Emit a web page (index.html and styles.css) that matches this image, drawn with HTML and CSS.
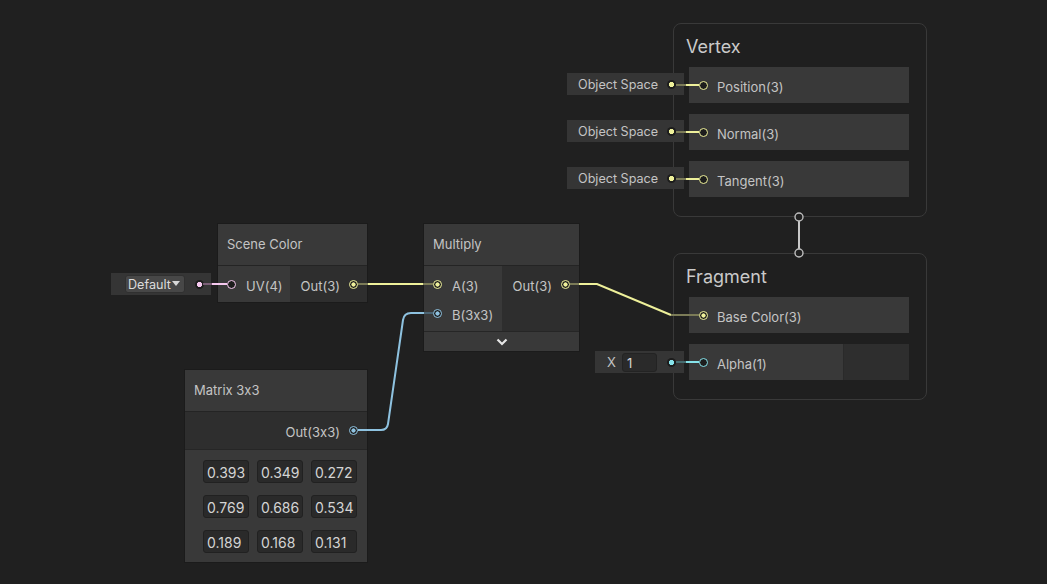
FILE: index.html
```html
<!DOCTYPE html>
<html>
<head>
<meta charset="utf-8">
<link rel="stylesheet" href="styles.css">
</head>
<body>
<div class="canvas">

  <!-- Vertex context -->
  <div class="context vertex">
    <div class="ctx-title">Vertex</div>
    <div class="block"><div class="block-main"><span class="port yellow"></span><span class="lbl">Position(3)</span></div></div>
    <div class="block"><div class="block-main"><span class="port yellow"></span><span class="lbl">Normal(3)</span></div></div>
    <div class="block"><div class="block-main"><span class="port yellow"></span><span class="lbl">Tangent(3)</span></div></div>
  </div>

  <!-- Fragment context -->
  <div class="context fragment">
    <div class="ctx-title">Fragment</div>
    <div class="block"><div class="block-main"><span class="port yellow filled"></span><span class="lbl">Base Color(3)</span></div></div>
    <div class="block split"><div class="block-main"><span class="port cyan"></span><span class="lbl">Alpha(1)</span></div><div class="block-side"></div></div>
  </div>

  <!-- inline inputs -->
  <div class="inline-input os1"><span class="inline-label">Object Space</span><span class="dot yellow"></span></div>
  <div class="inline-input os2"><span class="inline-label">Object Space</span><span class="dot yellow"></span></div>
  <div class="inline-input os3"><span class="inline-label">Object Space</span><span class="dot yellow"></span></div>
  <div class="inline-input xin"><span class="x-label">X</span><span class="x-field">1</span><span class="dot cyan"></span></div>
  <div class="inline-input defin"><span class="dropdown"><span class="dd-text">Default</span><span class="dd-arrow"></span></span><span class="dot pink"></span></div>

  <!-- Scene Color -->
  <div class="node scene">
    <div class="node-title">Scene Color</div>
    <div class="node-ports">
      <div class="inputs w72">
        <div class="port-row"><span class="port pink"></span><span class="lbl">UV(4)</span></div>
      </div>
      <div class="outputs">
        <div class="port-row"><span class="lbl">Out(3)</span><span class="port yellow filled"></span></div>
      </div>
    </div>
  </div>

  <!-- Multiply -->
  <div class="node multiply">
    <div class="node-title">Multiply</div>
    <div class="node-ports">
      <div class="inputs w78">
        <div class="port-row"><span class="port yellow filled"></span><span class="lbl">A(3)</span></div>
        <div class="port-row"><span class="port blue filled"></span><span class="lbl">B(3x3)</span></div>
      </div>
      <div class="outputs">
        <div class="port-row"><span class="lbl">Out(3)</span><span class="port yellow filled"></span></div>
      </div>
    </div>
    <div class="collapse">
      <svg width="12" height="8" viewBox="0 0 12 8"><path d="M1.5 1.5 L6 6 L10.5 1.5" fill="none" stroke="#e6e6e6" stroke-width="2.2"/></svg>
    </div>
  </div>

  <!-- Matrix 3x3 -->
  <div class="node matrix">
    <div class="node-title">Matrix 3x3</div>
    <div class="outputs single">
      <div class="port-row"><span class="lbl">Out(3x3)</span><span class="port blue filled"></span></div>
    </div>
    <div class="matrix-body">
      <span class="field">0.393</span><span class="field">0.349</span><span class="field">0.272</span>
      <span class="field">0.769</span><span class="field">0.686</span><span class="field">0.534</span>
      <span class="field">0.189</span><span class="field">0.168</span><span class="field">0.131</span>
    </div>
  </div>

  <!-- edges -->
  <svg class="edges" width="1047" height="584" viewBox="0 0 1047 584">
    <g fill="none" stroke-width="2">
      <!-- Scene Color -> Multiply A -->
      <path d="M358 284 H368" stroke="#7b7b57"/>
      <path d="M368 284 H423" stroke="#eef09a"/>
      <path d="M423 284 H433" stroke="#7b7b57"/>
      <!-- Multiply Out -> Base Color -->
      <path d="M570 284 H579" stroke="#7b7b57"/>
      <path d="M579 284 H597 L671 315" stroke="#eef09a"/>
      <path d="M671 315 H699" stroke="#7b7b57"/>
      <!-- Matrix -> B -->
      <path d="M358 430 H381 Q387 430 388 424 L403 320 Q404 313 411 313 H424" stroke="#8ec2e0"/>
      <path d="M424 313 H433" stroke="#4b6473"/>
      <!-- Default -> UV -->
      <path d="M203 284 H212" stroke="#7a5e76"/>
      <path d="M212 284 H227" stroke="#f6c9ef"/>
      <!-- Object space -> vertex ports -->
      <path d="M676 85 H686" stroke="#7b7b57"/>
      <path d="M686 85 H699" stroke="#eef09a"/>
      <path d="M676 132 H686" stroke="#7b7b57"/>
      <path d="M686 132 H699" stroke="#eef09a"/>
      <path d="M676 179 H686" stroke="#7b7b57"/>
      <path d="M686 179 H699" stroke="#eef09a"/>
      <!-- X -> Alpha -->
      <path d="M676 362 H686" stroke="#466b6e"/>
      <path d="M686 362 H699" stroke="#86e3ea"/>
      <!-- Vertex -> Fragment -->
      <path d="M799 221 V249" stroke="#c9c9c9"/>
    </g>
    <circle cx="799" cy="217" r="4" fill="#202020" stroke="#bdbdbd" stroke-width="1.4"/>
    <circle cx="799" cy="253" r="4" fill="#202020" stroke="#bdbdbd" stroke-width="1.4"/>
  </svg>
</div>
</body>
</html>
```

FILE: styles.css
```css
html, body {
  margin: 0;
  padding: 0;
  background: #202020;
}

.canvas {
  position: relative;
  width: 1047px;
  height: 584px;
  overflow: hidden;
  background: #202020;
  font-family: Inter, "Noto Sans", "DejaVu Sans", sans-serif;
  font-size: 13px;
  font-feature-settings: "calt" 0;
  color: #c4c4c4;
}

.lbl { padding-top: 3px; }

/* ---------- ports ---------- */
.port {
  display: inline-block;
  flex: none;
  width: 9px;
  height: 9px;
  box-sizing: border-box;
  border-radius: 50%;
  border: 1.5px solid currentColor;
  background: #1d1d1d;
}
.port.yellow { color: #eef09a; }
.port.blue { color: #8ec2e0; }
.port.pink { color: #f6c9ef; }
.port.cyan { color: #86e3ea; }
.port.filled { background: radial-gradient(circle, currentColor 0 1.8px, #1d1d1d 2.4px); }

.dot {
  display: inline-block;
  flex: none;
  width: 9px;
  height: 9px;
  border-radius: 50%;
  background: radial-gradient(circle, var(--c) 0 2.3px, #1c1c1c 2.9px);
}
.dot.yellow { --c: #eef09a; }
.dot.cyan { --c: #86e3ea; }
.dot.pink { --c: #f6c9ef; }

/* ---------- nodes ---------- */
.node {
  position: absolute;
  background: #393939;
  box-shadow: 0 0 0 1px #1b1b1b;
}
.node-title {
  height: 41px;
  line-height: 41px;
  padding-left: 9px;
  border-bottom: 1px solid #242424;
  color: #c4c4c4;
}
.node-ports {
  display: flex;
}
.inputs {
  display: flex;
  flex-direction: column;
  gap: 5px;
  padding: 6px 0;
  background: #393939;
}
.inputs.w72 { width: 72px; }
.inputs.w78 { width: 78px; }
.outputs {
  flex: 1;
  display: flex;
  flex-direction: column;
  align-items: flex-end;
  padding: 6px 0;
  background: #2e2e2e;
}
.port-row {
  height: 24px;
  display: flex;
  align-items: center;
  gap: 10px;
  padding: 0 9px;
}
.outputs .port-row { gap: 9px; }

.scene { left: 218px; top: 224px; width: 149px; }
.multiply { left: 424px; top: 224px; width: 155px; }
.matrix { left: 185px; top: 370px; width: 182px; }

.collapse {
  height: 19px;
  border-top: 1px solid #262626;
  display: flex;
  align-items: center;
  justify-content: center;
  background: #393939;
}
.collapse svg { display: block; margin-top: 1px; }

.outputs.single {
  padding: 6px 0 7px;
  border-bottom: 1px solid #262626;
}

.matrix-body {
  display: grid;
  grid-template-columns: repeat(3, 46px);
  grid-auto-rows: 23px;
  column-gap: 8px;
  row-gap: 12px;
  padding: 10px 0 9px 18px;
  height: 93px;
}
.field {
  box-sizing: border-box;
  background: #2a2a2a;
  border: 1px solid #212121;
  border-radius: 3px;
  padding-left: 3px;
  padding-top: 1px;
  line-height: 21px;
  color: #d4d4d4;
  font-size: 14px;
}

/* ---------- contexts ---------- */
.context {
  position: absolute;
  left: 673px;
  width: 254px;
  box-sizing: border-box;
  border: 1px solid #393939;
  border-radius: 8px;
  background: #1f1f1f;
}
.vertex { top: 23px; height: 194px; }
.fragment { top: 253px; height: 147px; }
.ctx-title {
  height: 43px;
  line-height: 46px;
  padding-left: 12px;
  font-size: 18px;
  color: #cacaca;
}
.block {
  display: flex;
  margin-left: 15px;
  width: 220px;
  height: 36px;
  margin-bottom: 11px;
  background: #393939;
}
.block-main {
  flex: 1;
  display: flex;
  align-items: center;
  gap: 9px;
  padding-left: 10px;
}
.block.split .block-main { flex: none; width: 144px; }
.block-side {
  flex: 1;
  background: #2e2e2e;
  border-left: 1px solid #2a2a2a;
}

/* ---------- inline inputs ---------- */
.inline-input {
  position: absolute;
  height: 22px;
  box-sizing: border-box;
  display: flex;
  align-items: center;
  background: #353535;
  padding-right: 8px;
}
.inline-label { flex: 1; padding-left: 11px; font-size: 12.6px; }
.os1 { left: 567px; top: 73px; width: 117px; }
.os2 { left: 567px; top: 120px; width: 117px; }
.os3 { left: 567px; top: 167px; width: 117px; }

.xin { left: 595px; top: 351px; width: 89px; }
.x-label { padding-left: 12px; width: 15px; }
.x-field {
  box-sizing: border-box;
  width: 35px;
  height: 19px;
  line-height: 19px;
  margin-right: auto;
  padding-left: 4px;
  background: #2a2a2a;
  border: 1px solid #232323;
  border-radius: 3px;
  color: #d6d6d6;
}

.defin { left: 111px; top: 273px; width: 100px; padding-right: 7px; }
.dropdown {
  position: relative;
  margin-left: 14px;
  margin-right: auto;
  width: 60px;
  height: 18px;
  box-sizing: border-box;
  background: #474747;
  border: 1px solid #303030;
  border-radius: 3px;
  display: flex;
  align-items: center;
}
.dd-text {
  padding-left: 2px;
  white-space: nowrap;
  font-size: 12.6px;
  color: #dcdcdc;
}
.dd-arrow {
  position: absolute;
  right: 4px;
  top: 5px;
  width: 0;
  height: 0;
  border-left: 4px solid transparent;
  border-right: 4px solid transparent;
  border-top: 5px solid #d8d8d8;
  box-shadow: none;
}

/* ---------- edges ---------- */
.edges {
  position: absolute;
  left: 0;
  top: 0;
  pointer-events: none;
}
```
